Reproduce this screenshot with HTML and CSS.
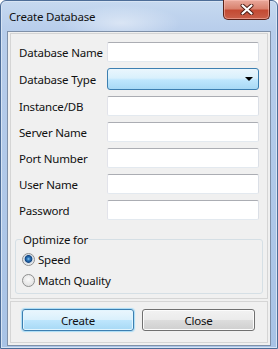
FILE: index.html
```html
<!DOCTYPE html>
<html lang="en">
<head>
    <meta charset="UTF-8">
    <title>Create Database</title>
    <link rel="stylesheet" href="styles.css">
</head>
<body>

<div class="window">
    <div class="titlebar">
        <span class="title">Create Database</span>
        <button class="close-btn" type="button" aria-label="Close">
            <svg width="14" height="11" viewBox="0 0 14 11">
                <path d="M2.5 1.5 L11.5 9.5 M11.5 1.5 L2.5 9.5" stroke="#4a1a12" stroke-width="4" stroke-linecap="round"/>
                <path d="M2.5 1.5 L11.5 9.5 M11.5 1.5 L2.5 9.5" stroke="#fff" stroke-width="2.2" stroke-linecap="round"/>
            </svg>
        </button>
    </div>

    <div class="client">
        <div class="panel fields-panel">
            <div class="form-grid">
                <label for="db-name">Database Name</label>
                <input type="text" id="db-name">

                <label>Database Type</label>
                <div class="combo"><span class="combo-arrow"></span></div>

                <label for="instance">Instance/DB</label>
                <input type="text" id="instance">

                <label for="server">Server Name</label>
                <input type="text" id="server">

                <label for="port">Port Number</label>
                <input type="text" id="port">

                <label for="user">User Name</label>
                <input type="text" id="user">

                <label for="password">Password</label>
                <input type="password" id="password">
            </div>

            <fieldset class="group">
                <legend>Optimize for</legend>
                <label class="radio"><input type="radio" name="optimize" checked> Speed</label>
                <label class="radio"><input type="radio" name="optimize"> Match Quality</label>
            </fieldset>
        </div>

        <div class="panel button-panel">
            <button class="btn btn-default" type="button">Create</button>
            <button class="btn" type="button">Close</button>
        </div>
    </div>
</div>

</body>
</html>
```

FILE: styles.css
```css
* {
    box-sizing: border-box;
}
body {
    margin: 0;
    font-family: "Noto Sans", "Open Sans", sans-serif;
    font-size: 11.5px;
    letter-spacing: -0.2px;
    color: #111;
}
.window {
    width: 278px;
    height: 349px;
    display: flex;
    flex-direction: column;
    border: 1px solid #4d6d98;
    border-radius: 6px 6px 0 0;
    background: linear-gradient(to bottom, #c6d9f0 0, #b7cdeb 30px, #a8c3e6 100%);
    box-shadow: inset 0 0 0 1px #d7e4f4;
}
.titlebar {
    height: 30px;
    display: flex;
    justify-content: space-between;
    padding: 0 7px 0 8px;
    background: radial-gradient(ellipse 60px 18px at 120px 22px, rgba(255, 255, 255, 0.45), rgba(255, 255, 255, 0));
}
.title {
    line-height: 30px;
    padding-top: 1px;
}
.close-btn {
    width: 47px;
    height: 20px;
    margin-top: -1px;
    padding: 0;
    border: 1px solid #5a2219;
    border-top: none;
    border-radius: 0 0 5px 5px;
    background: linear-gradient(to bottom, #e9a99c 0, #d9826f 45%, #c34a33 55%, #c9604a 100%);
    box-shadow: inset 0 0 0 1px rgba(255, 200, 190, 0.5);
    display: flex;
    align-items: center;
    justify-content: center;
}
.client {
    flex: 1;
    display: flex;
    flex-direction: column;
    gap: 2px;
    margin: 0 6px 2px 6px;
    padding: 1px 2px 2px 2px;
    background: #f0f0f0;
    border: 1px solid #7f90a8;
}
.panel {
    border: 1px solid #d5d5d5;
    background: #f0f0f0;
}
.form-grid {
    display: grid;
    grid-template-columns: 88px 1fr;
    row-gap: 6px;
    align-items: center;
    padding: 8px 8px 0 8px;
    white-space: nowrap;
}
.form-grid input {
    height: 20px;
    width: 100%;
    margin: 0;
    border: 1px solid;
    border-color: #abadb3 #dbdfe6 #e3e9ef #e2e3ea;
    border-radius: 2px;
    background: #fff;
}
.combo {
    height: 22px;
    border: 1px solid #3c7fb1;
    border-radius: 3px;
    background: linear-gradient(to bottom, #eaf6fd 0, #d9f0fc 45%, #bee6fd 55%, #a7d9f5 100%);
    display: flex;
    align-items: center;
    justify-content: flex-end;
    padding-right: 5px;
}
.combo-arrow {
    width: 0;
    height: 0;
    border-left: 4px solid transparent;
    border-right: 4px solid transparent;
    border-top: 4px solid #000;
}
.group {
    margin: 11px 4px 4px 4px;
    padding: 3px 6px 4px 6px;
    border: 1px solid #d5dfe5;
    border-radius: 3px;
    display: flex;
    flex-direction: column;
    gap: 4px;
}
.group legend {
    padding: 0 1px;
    line-height: 17px;
}
.radio {
    display: flex;
    align-items: center;
    gap: 3px;
    line-height: 17px;
}
.radio input {
    appearance: none;
    width: 13px;
    height: 13px;
    margin: 0;
    border: 1px solid #8e8f8f;
    border-radius: 50%;
    background: radial-gradient(circle at 50% 40%, #fafafa 0, #e4e4e4 6px);
}
.radio input:checked {
    background: radial-gradient(circle at 50% 45%, #8ec8f0 0, #2f7bc0 1.5px, #12447f 3.5px, #cfd8e2 4.2px, #f2f2f2 6px);
}
.button-panel {
    flex: 1;
    display: grid;
    grid-template-columns: 112px 113px;
    column-gap: 8px;
    align-content: start;
    padding: 7px 0 0 11px;
}
.btn {
    height: 22px;
    margin: 0;
    padding: 0;
    font-family: inherit;
    font-size: 11.5px;
    letter-spacing: inherit;
    color: #111;
    border: 1px solid #707070;
    border-radius: 3px;
    background: linear-gradient(to bottom, #f2f2f2 0, #ebebeb 50%, #dddddd 50%, #cfcfcf 100%);
    box-shadow: inset 0 0 0 1px #fcfcfc;
}
.btn-default {
    border-color: #3c7fb1;
    background: linear-gradient(to bottom, #eaf6fd 0, #d9f0fc 50%, #bee6fd 50%, #a7d9f5 100%);
    box-shadow: inset 0 0 0 1px #e2f5fe, 0 0 1px 1px #a9dcf6;
}
```
